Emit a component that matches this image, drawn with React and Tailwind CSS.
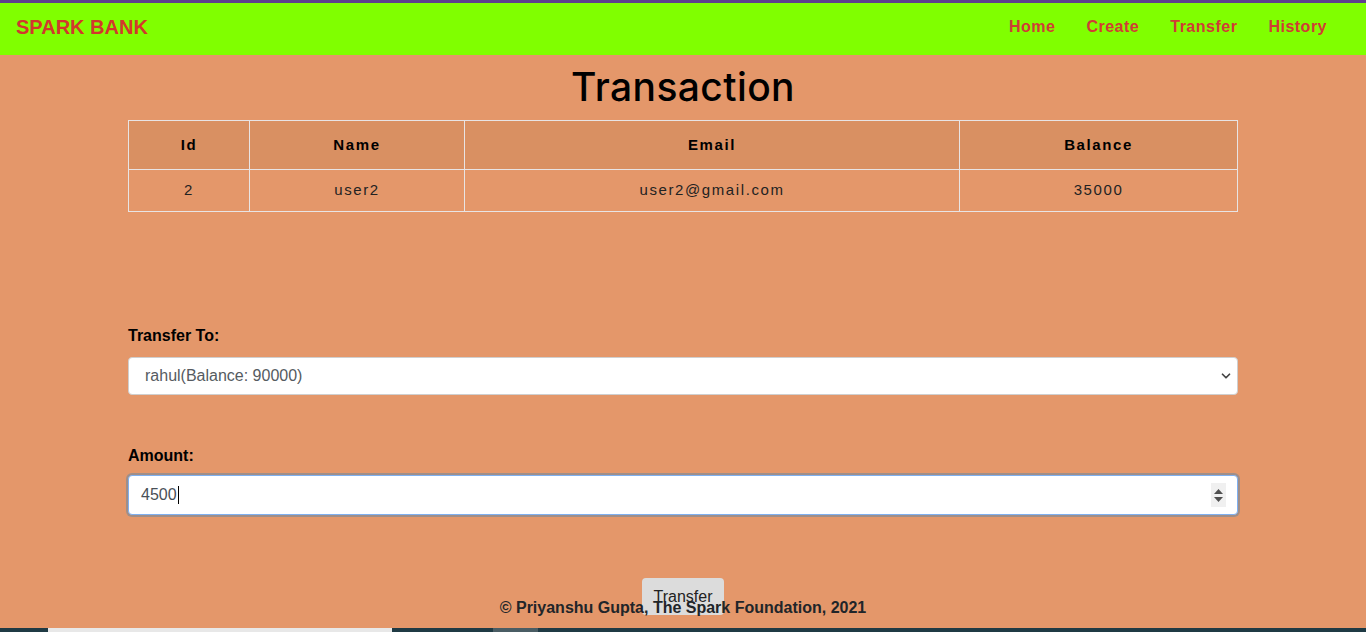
import { ChevronDown } from 'lucide-react';

const users = [{ id: 2, name: 'user2', email: 'user2@gmail.com', balance: 35000 }];

export default function App() {
  return (
    <div
      className="relative h-[632px] overflow-hidden bg-[#e4976a] text-black"
      style={{ fontFamily: '"Liberation Sans", Arial, sans-serif' }}
    >
      {/* top strip + navbar */}
      <div className="h-[3px] bg-[#5e3f8e]" />
      <nav className="flex h-[52px] items-center justify-between bg-[#80ff00] pb-[5px] pl-4 pr-[39px]">
        <a className="text-[20px] font-bold text-[#d2382c]">SPARK BANK</a>
        <ul className="flex gap-[31px] text-[16px] font-bold tracking-[0.5px] text-[#d03c35]">
          <li>Home</li>
          <li>Create</li>
          <li>Transfer</li>
          <li>History</li>
        </ul>
      </nav>

      <main className="mx-auto w-[1110px]">
        <h1
          className="mt-[8px] text-center text-[39px] font-medium leading-[48px] tracking-[0.4px]"
          style={{ fontFamily: 'Inter, "Open Sans", sans-serif' }}
        >
          Transaction
        </h1>

        <table className="mt-[9px] w-full border-collapse text-center text-[15px] tracking-[1.6px]">
          <thead>
            <tr className="h-[49px] bg-[#d99062]">
              <th className="w-[121px] border border-[#e8e4e4]">Id</th>
              <th className="w-[215px] border border-[#e8e4e4]">Name</th>
              <th className="w-[495px] border border-[#e8e4e4]">Email</th>
              <th className="border border-[#e8e4e4]">Balance</th>
            </tr>
          </thead>
          <tbody>
            {users.map((u) => (
              <tr key={u.id} className="h-[42px] text-[#222]">
                <td className="border border-[#e8e4e4]">{u.id}</td>
                <td className="border border-[#e8e4e4]">{u.name}</td>
                <td className="border border-[#e8e4e4]">{u.email}</td>
                <td className="border border-[#e8e4e4]">{u.balance}</td>
              </tr>
            ))}
          </tbody>
        </table>

        <form className="mt-[115px]">
          <label className="block text-[16px] font-bold leading-[18px]">Transfer To:</label>
          <div className="mt-[12px] flex h-[38px] items-center justify-between rounded-[4px] border border-[#cfcfcf] bg-white pl-[16px] pr-[4px] text-[16px] text-[#555b61]">
            <span>rahul(Balance: 90000)</span>
            <ChevronDown size={14} strokeWidth={3} className="text-[#444]" />
          </div>

          <label className="mt-[52px] block text-[16px] font-bold leading-[18px]">Amount:</label>
          <div className="mt-[10px] flex h-[40px] items-center justify-between rounded-[4px] border border-[#7fb0f0] bg-white pl-[12px] pr-[11px] text-[16px] text-[#495057] shadow-[0_0_0_2px_#a08e88]">
            <span className="flex items-center">
              4500<span className="ml-[1px] h-[18px] w-px bg-black" />
            </span>
            <span className="flex h-[24px] w-[15px] flex-col items-center justify-center gap-[3px] bg-[#f0f0f0]">
              <svg width="9" height="5" viewBox="0 0 9 5"><path d="M4.5 0L9 5H0z" fill="#505050" /></svg>
              <svg width="9" height="5" viewBox="0 0 9 5"><path d="M0 0h9L4.5 5z" fill="#505050" /></svg>
            </span>
          </div>

          <div className="mt-[63px] flex justify-center">
            <button
              type="button"
              className="h-[37px] w-[82px] rounded-[4px] bg-[#dcdcdc] text-[16px] text-[#222]"
            >
              Transfer
            </button>
          </div>
        </form>
      </main>

      {/* fixed footer overlapping the button */}
      <footer className="absolute inset-x-0 bottom-[15px] text-center text-[16px] font-bold leading-[18px] text-[#212529]">
        © Priyanshu Gupta, The Spark Foundation, 2021
      </footer>

      {/* bottom window strip */}
      <div className="absolute inset-x-0 bottom-0 flex h-[4px] bg-[#1f3a44]">
        <div className="ml-[48px] w-[344px] bg-[#e8e8e8]" />
        <div className="ml-[101px] w-[45px] bg-[#4a5d64]" />
      </div>
    </div>
  );
}
